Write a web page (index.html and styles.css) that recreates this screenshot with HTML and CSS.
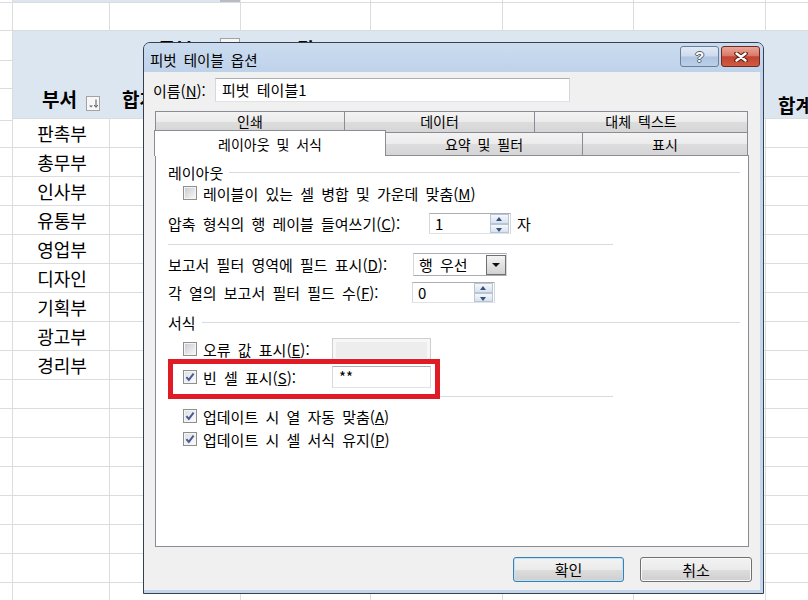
FILE: index.html
```html
<!DOCTYPE html>
<html lang="ko">
<head>
    <meta charset="UTF-8">
    <meta name="viewport" content="width=device-width, initial-scale=1.0">
    <title>피벗 테이블 옵션</title>
    <link rel="stylesheet" href="styles.css">
</head>
<body>
    <div class="sheet">
        <div class="row row-top"><i></i><i class="shade"></i><i class="shade"><b class="mini-btn"></b></i></div>
        <div class="row row-first"></div>
        <div class="row band band-1">
            <i class="gutter"></i>
            <i></i>
            <span class="hdr hdr-filter">구분<b class="filter-btn"></b></span>
            <span class="hdr hdr-center">값</span>
        </div>
        <div class="row band band-2"><i class="gutter"></i></div>
        <div class="row band band-3">
            <i class="gutter"></i>
            <span class="hdr hdr-dept">부서
                <svg class="sort-btn" width="14" height="15" viewBox="0 0 14 15">
                    <rect x="0.5" y="0.5" width="13" height="14" fill="#f7f7f7" stroke="#a3a3a3"/>
                    <path d="M3 9.5h4l-2 2z" fill="#6b6b6b"/>
                    <path d="M10 3.5v7" stroke="#555" stroke-width="1"/>
                    <path d="M8.2 9l1.8 2.4 1.8-2.4" fill="none" stroke="#555" stroke-width="1"/>
                </svg>
            </span>
            <span class="hdr hdr-sum">합계 : 금액</span>
            <i></i><i></i><i></i><i></i>
            <span class="hdr hdr-total">합계</span>
        </div>
        <div class="row"><i></i><span class="dept">판촉부</span></div>
        <div class="row"><i></i><span class="dept">총무부</span></div>
        <div class="row"><i></i><span class="dept">인사부</span></div>
        <div class="row"><i></i><span class="dept">유통부</span></div>
        <div class="row"><i></i><span class="dept">영업부</span></div>
        <div class="row"><i></i><span class="dept">디자인</span></div>
        <div class="row"><i></i><span class="dept">기획부</span></div>
        <div class="row"><i></i><span class="dept">광고부</span></div>
        <div class="row"><i></i><span class="dept">경리부</span></div>
        <div class="row"></div>
        <div class="row"></div>
        <div class="row"></div>
        <div class="row"></div>
        <div class="row"></div>
        <div class="row"></div>
        <div class="row"></div>
        <div class="row"></div>
    </div>

    <div class="dialog">
        <div class="titlebar">
            <span class="title">피벗 테이블 옵션</span>
            <div class="caption-btns">
                <button class="cap cap-help">?</button>
                <button class="cap cap-close">
                    <svg width="14" height="10" viewBox="0 0 14 10">
                        <path d="M2.5 1.5l9 7M11.5 1.5l-9 7" stroke="#5a1f18" stroke-width="4.6" stroke-linecap="round"/>
                        <path d="M2.5 1.5l9 7M11.5 1.5l-9 7" stroke="#fff" stroke-width="2.4" stroke-linecap="round"/>
                    </svg>
                </button>
            </div>
        </div>

        <div class="dlg-body">
            <div class="name-row">
                <span class="name-label">이름(<u>N</u>):</span>
                <div class="textbox name-box">피벗 테이블1</div>
            </div>

            <div class="tabs">
                <div class="tab-row">
                    <div class="tab tab-print">인쇄</div>
                    <div class="tab tab-data">데이터</div>
                    <div class="tab tab-alt">대체 텍스트</div>
                </div>
                <div class="tab-row">
                    <div class="tab tab-layout active">레이아웃 및 서식</div>
                    <div class="tab tab-summary">요약 및 필터</div>
                    <div class="tab tab-display">표시</div>
                </div>
            </div>

            <div class="panel">
                <div class="group-head head-layout"><span>레이아웃</span><hr></div>

                <div class="opt opt-check row-merge">
                    <span class="cb"></span>
                    <span class="lbl">레이블이 있는 셀 병합 및 가운데 맞춤(<u>M</u>)</span>
                </div>

                <div class="opt row-indent">
                    <span class="lbl lbl-indent">압축 형식의 행 레이블 들여쓰기(<u>C</u>):</span>
                    <div class="spin spin-indent">
                        <span class="spin-val">1</span>
                        <span class="spin-btns"><i class="up"></i><i class="down"></i></span>
                    </div>
                    <span class="unit">자</span>
                </div>

                <hr class="sep sep-1">

                <div class="opt row-order">
                    <span class="lbl lbl-order">보고서 필터 영역에 필드 표시(<u>D</u>):</span>
                    <div class="combo">
                        <span class="combo-val">행 우선</span>
                        <span class="combo-btn"></span>
                    </div>
                </div>

                <div class="opt row-count">
                    <span class="lbl lbl-count">각 열의 보고서 필터 필드 수(<u>F</u>):</span>
                    <div class="spin spin-count">
                        <span class="spin-val">0</span>
                        <span class="spin-btns"><i class="up"></i><i class="down"></i></span>
                    </div>
                </div>

                <div class="group-head head-format"><span>서식</span><hr></div>

                <div class="opt opt-check row-error">
                    <span class="cb"></span>
                    <span class="lbl lbl-field">오류 값 표시(<u>E</u>):</span>
                    <div class="textbox field disabled"></div>
                </div>

                <div class="opt opt-check row-empty highlight">
                    <span class="cb checked">
                        <svg width="10" height="10" viewBox="0 0 10 10"><path d="M1.4 5.2l2.4 2.7L8.6 1.6" fill="none" stroke="#4a5b94" stroke-width="2"/></svg>
                    </span>
                    <span class="lbl lbl-field">빈 셀 표시(<u>S</u>):</span>
                    <div class="textbox field">**</div>
                </div>

                <hr class="sep sep-2">

                <div class="opt opt-check row-autofit">
                    <span class="cb checked">
                        <svg width="10" height="10" viewBox="0 0 10 10"><path d="M1.4 5.2l2.4 2.7L8.6 1.6" fill="none" stroke="#4a5b94" stroke-width="2"/></svg>
                    </span>
                    <span class="lbl">업데이트 시 열 자동 맞춤(<u>A</u>)</span>
                </div>

                <div class="opt opt-check row-keep">
                    <span class="cb checked">
                        <svg width="10" height="10" viewBox="0 0 10 10"><path d="M1.4 5.2l2.4 2.7L8.6 1.6" fill="none" stroke="#4a5b94" stroke-width="2"/></svg>
                    </span>
                    <span class="lbl">업데이트 시 셀 서식 유지(<u>P</u>)</span>
                </div>
            </div>

            <div class="btn-row">
                <button class="btn btn-default">확인</button>
                <button class="btn">취소</button>
            </div>
        </div>
    </div>
</body>
</html>
```

FILE: styles.css
```css
body {
    margin: 0;
    width: 808px;
    height: 600px;
    overflow: hidden;
    position: relative;
    font-family: "Noto Sans CJK KR", "Noto Sans", sans-serif;
    color: #000;
    background: #fff;
}

/* spreadsheet behind the dialog */
.sheet {
    height: 600px;
    background-image:
        linear-gradient(#dadcdd, #dadcdd),
        linear-gradient(#dadcdd, #dadcdd),
        linear-gradient(#dadcdd, #dadcdd),
        linear-gradient(#dadcdd, #dadcdd),
        linear-gradient(#dadcdd, #dadcdd),
        linear-gradient(#dadcdd, #dadcdd),
        linear-gradient(#dadcdd, #dadcdd);
    background-size: 1px 100%;
    background-repeat: no-repeat;
    background-position: 12px 0, 109px 0, 240px 0, 370px 0, 502px 0, 633px 0, 765px 0;
}

.row {
    display: grid;
    grid-template-columns: 13px 97px 131px 130px 132px 131px 132px 1fr;
    height: 29px;
    box-sizing: border-box;
    border-bottom: 1px solid #dadcdd;
}

.row i, .row span {
    display: block;
    font-style: normal;
}

.row-top {
    height: 3px;
}

.row-top .shade {
    background: #dce6f1;
    position: relative;
}

.mini-btn {
    position: absolute;
    right: 1px;
    top: 0;
    width: 20px;
    height: 2px;
    background: #b8bcc2;
}

.row-first {
    height: 28px;
}

.band {
    border-bottom: none;
    background: linear-gradient(to right, #fff 12px, #dce6f1 12px);
}

.band-1 { height: 30px; }
.band-2 { height: 28px; }

.band-3 {
    height: 30px;
    border-bottom: 1px solid #dadcdd;
}

.gutter {
    border-bottom: 1px solid #dadcdd;
    border-right: 1px solid #dadcdd;
    box-sizing: border-box;
    height: 100%;
    background: #fff;
}

.hdr {
    font-size: 19px;
    font-weight: bold;
    line-height: 20px;
}

.hdr-filter {
    display: flex !important;
    align-items: flex-start;
    padding: 8px 0 0 48px;
}

.filter-btn {
    width: 20px;
    height: 18px;
    margin: -1px 1px 0 auto;
    border: 1px solid #a3a3a3;
    background: #f7f7f7;
    box-sizing: border-box;
}

.hdr-center {
    text-align: center;
    padding-top: 8px;
}

.hdr-dept {
    display: flex !important;
    align-items: flex-end;
    padding: 0 0 12px 29px;
}

.sort-btn {
    margin: 0 0 -2px 9px;
}

.hdr-sum {
    padding: 0 0 12px 12px;
    align-self: end;
    white-space: nowrap;
}

.hdr-total {
    padding: 0 0 6px 12px;
    align-self: end;
    white-space: nowrap;
}

.dept {
    font-size: 18px;
    line-height: 28px;
    text-align: center;
    padding-left: 1px;
}

/* dialog window */
.dialog {
    position: absolute;
    left: 143px;
    top: 42px;
    width: 621px;
    height: 552px;
    box-sizing: border-box;
    border: 1px solid #34404f;
    border-radius: 7px 7px 0 0;
    background: #c3d5eb;
    font-size: 14px;
    word-spacing: 3px;
}

.titlebar {
    height: 29px;
    display: flex;
    align-items: flex-start;
    border-radius: 6px 6px 0 0;
    background: linear-gradient(#cbdcef, #bed2ea);
}

.title {
    padding: 8px 0 0 6px;
    line-height: 18px;
    font-size: 14.5px;
}

.caption-btns {
    margin-left: auto;
    display: flex;
    gap: 2px;
    padding: 3px 3px 0 0;
}

.cap {
    width: 39px;
    height: 21px;
    padding: 0;
    border-radius: 3px;
    display: flex;
    align-items: center;
    justify-content: center;
}

.cap-help {
    border: 1px solid #6b7f9c;
    background: linear-gradient(#e1eaf5 0%, #cddbed 48%, #aec4df 52%, #bcd0e8 100%);
    color: #fff;
    font-family: "Liberation Sans", sans-serif;
    font-weight: bold;
    font-size: 15px;
    text-shadow: 1px 0 #56606e, -1px 0 #56606e, 0 1px #56606e, 0 -1px #56606e;
}

.cap-close {
    border: 1px solid #6c2a22;
    background: linear-gradient(#e9a897 0%, #d9796a 45%, #c4432e 52%, #cf5b42 100%);
}

.dlg-body {
    height: 518px;
    margin-right: 3px;
    background: #f0f0f0;
    overflow: hidden;
}

.name-row {
    display: flex;
    align-items: center;
    padding: 6px 0 0 9px;
}

.name-label {
    flex: 0 0 62px;
    white-space: nowrap;
    word-spacing: 0;
    font-size: 15px;
}

.textbox {
    box-sizing: border-box;
    background: #fff;
    border: 1px solid #abadb3;
    border-left-color: #d5d9df;
    border-right-color: #d5d9df;
    border-bottom-color: #dfe3e8;
}

.name-box {
    width: 355px;
    height: 24px;
    line-height: 22px;
    padding-left: 6px;
    font-size: 15px;
}

/* tabs */
.tabs {
    margin: 9px 0 0 11px;
    width: 594px;
}

.tab-row {
    display: flex;
}

.tab {
    box-sizing: border-box;
    height: 21px;
    border: 1px solid #898c95;
    border-bottom: none;
    margin-right: -1px;
    background: linear-gradient(#f3f3f3 0%, #ebebeb 50%, #dddddd 51%, #d5d5d5 100%);
    text-align: center;
    line-height: 19px;
    white-space: nowrap;
}

.tab-print { width: 190px; }
.tab-data { width: 191px; }
.tab-alt { width: 214px; }

.tab-row + .tab-row .tab {
    height: 23px;
    line-height: 22px;
}

.tab-layout { width: 232px; }
.tab-summary { width: 198px; }
.tab-display { width: 166px; }

.tab.active {
    position: relative;
    z-index: 1;
    height: 26px !important;
    margin: -2px -1px -1px -1px;
    background: #fff;
    line-height: 26px !important;
}

/* tab page */
.panel {
    width: 594px;
    height: 392px;
    margin-left: 11px;
    box-sizing: border-box;
    border: 1px solid #898c95;
    background: #fff;
    padding: 6px 8px 0 12px;
    font-size: 15px;
}

.group-head {
    display: flex;
    align-items: center;
    height: 20px;
}

.group-head hr {
    flex: 1;
    margin: 0 0 0 6px;
    border: none;
    border-top: 1px solid #d5dbe1;
}

.head-format {
    margin-top: 9px;
}

.opt {
    display: flex;
    align-items: center;
    height: 20px;
    white-space: nowrap;
}

.opt-check {
    padding-left: 15px;
}

.cb {
    width: 14px;
    height: 14px;
    flex: none;
    box-sizing: border-box;
    border: 1px solid #8e8f8f;
    padding: 1px;
    background: linear-gradient(135deg, #c9ccd1, #f6f6f6) content-box, #f4f4f4;
    margin-right: 6px;
    display: flex;
    align-items: center;
    justify-content: center;
}

.cb.checked {
    background: linear-gradient(135deg, #dfe1e5, #fafafa) content-box, #f4f4f4;
}

.row-merge { margin-top: 1px; }

.row-indent {
    margin-top: 10px;
    height: 21px;
}

.lbl-indent { width: 261px; }
.lbl-order { width: 245px; }
.lbl-count { width: 244px; }
.lbl-field { width: 129px; }

.spin {
    box-sizing: border-box;
    height: 21px;
    display: flex;
    align-items: center;
    background: #fff;
    border: 1px solid #abadb3;
    border-left-color: #d5d9df;
    border-right-color: #d5d9df;
    border-bottom-color: #dfe3e8;
}

.spin-indent { width: 82px; }
.spin-count { width: 83px; }

.spin-val {
    flex: 1;
    padding-left: 5px;
}

.spin-btns {
    display: flex;
    flex-direction: column;
    width: 19px;
    height: 19px;
    margin-right: 1px;
}

.spin-btns i {
    flex: 1;
    box-sizing: border-box;
    border: 1px solid #b8c5d6;
    background: linear-gradient(#f5f8fc, #d8e2ef);
    position: relative;
}

.spin-btns i::after {
    content: "";
    position: absolute;
    left: 5px;
    top: 2px;
    border-left: 3.5px solid transparent;
    border-right: 3.5px solid transparent;
}

.spin-btns .up::after {
    border-bottom: 4px solid #3b4f7a;
}

.spin-btns .down::after {
    top: 3px;
    border-top: 4px solid #3b4f7a;
}

.unit {
    margin-left: 6px;
}

.sep {
    width: 445px;
    margin: 0;
    border: none;
    border-top: 1px solid #d5dbe1;
}

.sep-1 { margin-top: 10px; }
.sep-2 { margin-top: 8px; }

.row-order {
    margin-top: 8px;
    height: 23px;
}

.combo {
    box-sizing: border-box;
    width: 94px;
    height: 23px;
    display: flex;
    align-items: center;
    background: #fff;
    border: 1px solid #abadb3;
    border-left-color: #d5d9df;
    border-right-color: #d5d9df;
}

.combo-val {
    flex: 1;
    padding-left: 5px;
}

.combo-btn {
    width: 20px;
    height: 20px;
    box-sizing: border-box;
    border: 1px solid #6f6f6f;
    background: linear-gradient(#f3f3f3, #d2d2d2);
    position: relative;
}

.combo-btn::after {
    content: "";
    position: absolute;
    left: 5px;
    top: 7px;
    border-left: 4px solid transparent;
    border-right: 4px solid transparent;
    border-top: 4px solid #111;
}

.row-count {
    margin-top: 6px;
    height: 21px;
}

.row-error {
    margin-top: 6px;
    height: 22px;
}

.row-empty {
    margin-top: 6px;
    height: 22px;
    position: relative;
}

.field {
    width: 99px;
    height: 22px;
    line-height: 20px;
    padding-left: 6px;
}

.field.disabled {
    background: #ededed;
    border-color: #cfcfcf;
    box-shadow: inset 3px 3px 0 #f7f7f7, inset -3px -1px 0 #f7f7f7;
}

/* red annotation drawn over the empty-cell option */
.highlight::after {
    content: "";
    position: absolute;
    left: 0;
    top: -7px;
    width: 272px;
    height: 40px;
    box-sizing: border-box;
    border: 5px solid #e11b25;
}

.row-autofit { margin-top: 9px; }
.row-keep { margin-top: 3px; }

/* bottom buttons */
.btn-row {
    display: flex;
    justify-content: flex-end;
    gap: 16px;
    margin: 10px 8px 0 0;
}

.btn {
    width: 112px;
    height: 25px;
    padding: 0;
    border: 1px solid #707070;
    border-radius: 3px;
    background: linear-gradient(#f2f2f2 0%, #ebebeb 50%, #dddddd 51%, #cfcfcf 100%);
    box-shadow: inset 0 0 0 1px #fafafa;
    font-family: inherit;
    font-size: 15px;
    color: #000;
}

.btn-default {
    width: 111px;
    border-color: #3c7fb1;
    box-shadow: inset 0 0 0 1px #bfe3f7;
}
```
